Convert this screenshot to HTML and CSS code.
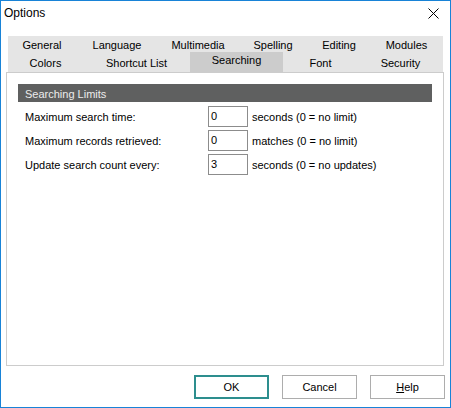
FILE: index.html
```html
<!DOCTYPE html>
<html>
<head>
<meta charset="utf-8">
<link rel="stylesheet" href="styles.css">
</head>
<body>
<div class="window">
  <div class="titlebar">
    <span class="title">Options</span>
    <svg class="close" width="11" height="11" viewBox="0 0 11 11"><path d="M0.5 0.5 L10.5 10.5 M10.5 0.5 L0.5 10.5" stroke="#000" stroke-width="1" fill="none"/></svg>
  </div>
  <div class="tabs">
    <div class="tabrow row1">
      <div class="tab">General</div>
      <div class="tab">Language</div>
      <div class="tab">Multimedia</div>
      <div class="tab">Spelling</div>
      <div class="tab">Editing</div>
      <div class="tab">Modules</div>
    </div>
    <div class="tabrow row2">
      <div class="tab">Colors</div>
      <div class="tab">Shortcut List</div>
      <div class="tab selected">Searching</div>
      <div class="tab">Font</div>
      <div class="tab">Security</div>
    </div>
  </div>
  <div class="panel">
    <div class="section-header">Searching Limits</div>
    <div class="fields">
      <span class="label">Maximum search time:</span>
      <span class="input">0</span>
      <span class="unit">seconds (0 = no limit)</span>
      <span class="label">Maximum records retrieved:</span>
      <span class="input">0</span>
      <span class="unit">matches (0 = no limit)</span>
      <span class="label">Update search count every:</span>
      <span class="input">3</span>
      <span class="unit">seconds (0 = no updates)</span>
    </div>
  </div>
  <div class="buttons">
    <div class="btn default">OK</div>
    <div class="btn">Cancel</div>
    <div class="btn"><u>H</u>elp</div>
  </div>
</div>
</body>
</html>
```
FILE: styles.css
```css
* { box-sizing: border-box; }
html, body { margin: 0; padding: 0; background: #fff; }
body {
  font-family: "Liberation Sans", Arial, sans-serif;
  font-size: 11px;
  color: #000;
}
.window {
  width: 451px;
  height: 408px;
  border: 1px solid #1883d7;
  background: #fff;
  display: flex;
  flex-direction: column;
}
.titlebar {
  height: 35px;
  flex: none;
  display: flex;
  justify-content: space-between;
  align-items: flex-start;
  padding: 5px 11px 0 3px;
}
.title {
  font-size: 12px;
  line-height: 14px;
}
.close { margin-top: 2px; display: block; }
.tabs {
  flex: none;
  margin: 0 7px;
  height: 36px;
  background: #e5e5e5;
  display: flex;
  flex-direction: column;
}
.tabrow { display: grid; }
.row1 {
  grid-template-columns: 68px 82px 80px 70px 62px 73px;
  height: 17px;
}
.row2 {
  grid-template-columns: 75px 107px 93px 75px 85px;
  height: 19px;
}
.tab {
  text-align: center;
  white-space: nowrap;
  padding-top: 1px;
  line-height: 16px;
}
.row2 .tab { line-height: 18px; }
.row2 .tab.selected {
  background: #cccccc;
  margin-top: -1px;
  padding-top: 0;
  line-height: 17px;
  height: 20px;
}
.panel {
  flex: none;
  height: 294px;
  margin: 0 6px 0 5px;
  border: 1px solid #cccccc;
  padding: 11px 11px 0 11px;
}
.section-header {
  height: 18px;
  background: #5f6060;
  color: #ececec;
  padding: 2px 0 0 7px;
  line-height: 16px;
}
.fields {
  margin-top: 4px;
  padding-left: 7px;
  display: grid;
  grid-template-columns: 179px 40px auto;
  grid-auto-rows: 21px;
  row-gap: 3px;
  column-gap: 4px;
  align-items: center;
}
.label, .unit { white-space: nowrap; }
.input {
  height: 21px;
  border: 1px solid #8c8c8c;
  padding-left: 2px;
  line-height: 19px;
}
.buttons {
  flex: none;
  margin-top: 9px;
  padding-right: 5px;
  display: flex;
  justify-content: flex-end;
  gap: 13px;
}
.btn {
  width: 75px;
  height: 24px;
  border: 1px solid #adadad;
  background: #fff;
  text-align: center;
  line-height: 22px;
}
.btn.default {
  border: 2px solid #2d8e8e;
  line-height: 20px;
}
.btn u { text-decoration: underline; }
```
